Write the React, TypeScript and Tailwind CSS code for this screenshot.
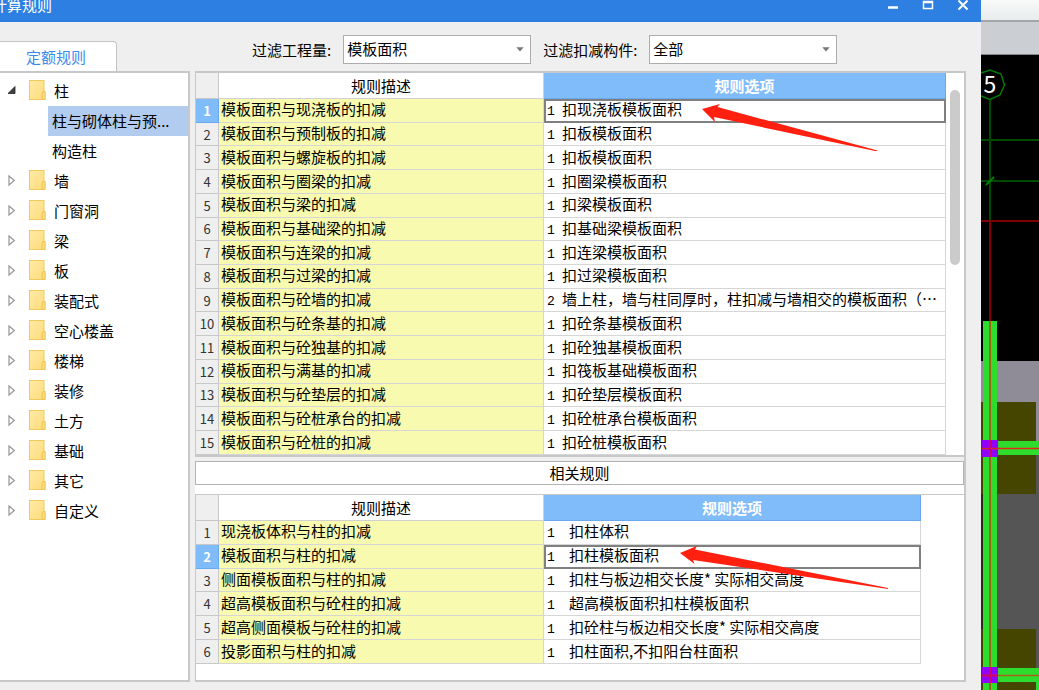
import React, { useState } from 'react';

interface Rule {
  desc: string;
  code: string;
  option: string;
}

interface RuleTableProps {
  rules: Rule[];
  selected: number;
  onSelect: (index: number) => void;
  height: string;
  codeWidth: string;
  arrowRow: number;
  arrow: React.ReactNode;
}

const mainRules: Rule[] = [
  { desc: '模板面积与现浇板的扣减', code: '1', option: '扣现浇板模板面积' },
  { desc: '模板面积与预制板的扣减', code: '1', option: '扣板模板面积' },
  { desc: '模板面积与螺旋板的扣减', code: '1', option: '扣板模板面积' },
  { desc: '模板面积与圈梁的扣减', code: '1', option: '扣圈梁模板面积' },
  { desc: '模板面积与梁的扣减', code: '1', option: '扣梁模板面积' },
  { desc: '模板面积与基础梁的扣减', code: '1', option: '扣基础梁模板面积' },
  { desc: '模板面积与连梁的扣减', code: '1', option: '扣连梁模板面积' },
  { desc: '模板面积与过梁的扣减', code: '1', option: '扣过梁模板面积' },
  { desc: '模板面积与砼墙的扣减', code: '2', option: '墙上柱，墙与柱同厚时，柱扣减与墙相交的模板面积（…' },
  { desc: '模板面积与砼条基的扣减', code: '1', option: '扣砼条基模板面积' },
  { desc: '模板面积与砼独基的扣减', code: '1', option: '扣砼独基模板面积' },
  { desc: '模板面积与满基的扣减', code: '1', option: '扣筏板基础模板面积' },
  { desc: '模板面积与砼垫层的扣减', code: '1', option: '扣砼垫层模板面积' },
  { desc: '模板面积与砼桩承台的扣减', code: '1', option: '扣砼桩承台模板面积' },
  { desc: '模板面积与砼桩的扣减', code: '1', option: '扣砼桩模板面积' },
];

const relatedRules: Rule[] = [
  { desc: '现浇板体积与柱的扣减', code: '1', option: '扣柱体积' },
  { desc: '模板面积与柱的扣减', code: '1', option: '扣柱模板面积' },
  { desc: '侧面模板面积与柱的扣减', code: '1', option: '扣柱与板边相交长度* 实际相交高度' },
  { desc: '超高模板面积与砼柱的扣减', code: '1', option: '超高模板面积扣柱模板面积' },
  { desc: '超高侧面模板与砼柱的扣减', code: '1', option: '扣砼柱与板边相交长度* 实际相交高度' },
  { desc: '投影面积与柱的扣减', code: '1', option: '扣柱面积,不扣阳台柱面积' },
];

const treeItems = [
  { label: '柱', children: ['柱与砌体柱与预...', '构造柱'] },
  { label: '墙' },
  { label: '门窗洞' },
  { label: '梁' },
  { label: '板' },
  { label: '装配式' },
  { label: '空心楼盖' },
  { label: '楼梯' },
  { label: '装修' },
  { label: '土方' },
  { label: '基础' },
  { label: '其它' },
  { label: '自定义' },
];

const FolderIcon = () => (
  <svg width="17" height="21" viewBox="0 0 17 21" className="shrink-0">
    <defs>
      <linearGradient id="folder" x1="0" y1="0" x2="1" y2="1">
        <stop offset="0" stopColor="#ffeaa6" />
        <stop offset="1" stopColor="#ffdc7c" />
      </linearGradient>
    </defs>
    <rect x="0.5" y="0.5" width="14.5" height="19" fill="url(#folder)" stroke="#f0cb5c" />
    <path d="M13 19.500V13L14 11.500h2.200v8z" fill="#ffdc7a" stroke="#ecc350" />
  </svg>
);

const Expander = ({ open }: { open: boolean }) => (
  <svg width="9" height="11" viewBox="0 0 9 11" className="shrink-0">
    {open ? (
      <path d="M7 1.5V8.500H0z" fill="#404040" stroke="#262626" strokeWidth="0.8" />
    ) : (
      <path d="M1 1L6.3 5.5L1 10z" fill="#fff" stroke="#969696" strokeWidth="1.200" />
    )}
  </svg>
);

const FilterSelect = ({ id, label, options }: { id: string; label: string; options: string[] }) => (
  <div className="flex items-center gap-3">
    <label htmlFor={id}>{label}</label>
    <div className="relative">
      <select
        id={id}
        className="block h-[29px] w-[188px] appearance-none border border-[#adadad] bg-white pb-px pl-[3px] pr-6 text-[15px] leading-5 text-black outline-none"
      >
        {options.map((o) => (
          <option key={o}>{o}</option>
        ))}
      </select>
      <svg width="8" height="5" viewBox="0 0 8 5" className="pointer-events-none absolute right-[7px] top-3">
        <path d="M0.3 0.3h7.4L4 4.5z" fill="#777" />
      </svg>
    </div>
  </div>
);

const RuleTable: React.FC<RuleTableProps> = ({
  rules,
  selected,
  onSelect,
  height,
  codeWidth,
  arrowRow,
  arrow,
}) => (
  <table className={`w-full table-fixed border-separate border-spacing-0 leading-5 ${height}`}>
    <colgroup>
      <col className="w-[23px]" />
      <col className="w-[325px]" />
      <col />
    </colgroup>
    <thead>
      <tr className="h-[26px]">
        <td className="border-b border-r border-[#c8c8c8] bg-[#efefef] p-0"></td>
        <th className="border-b border-r border-[#d0d0d0] p-0 font-normal">规则描述</th>
        <th className="border-b border-r border-[#6ba9ee] bg-[#80bbfa] p-0 font-bold text-white">规则选项</th>
      </tr>
    </thead>
    <tbody>
      {rules.map((rule, i) => (
        <tr key={rule.desc} onClick={() => onSelect(i)}>
          <th
            className={`border-b border-r p-0 pt-px text-center text-[13px] ${
              i === selected
                ? 'border-[#6ba9ee] bg-[#80bbfa] font-bold text-white'
                : 'border-[#c8c8c8] bg-[#efefef] font-normal text-[#333]'
            }`}
          >
            {i + 1}
          </th>
          <td className="whitespace-nowrap border-b border-r border-[#d6d6d6] bg-[#f7faaf] p-0 pb-[2px] pl-[2px]">
            {rule.desc}
          </td>
          <td
            className={`relative whitespace-nowrap border-b border-r border-[#d6d6d6] p-0 pb-[2px] pl-[3px] ${
              i === selected ? 'outline-2 -outline-offset-2 outline-[#808080]' : ''
            }`}
          >
            <div className="flex h-5 items-baseline">
              <span className={`shrink-0 font-['Liberation_Mono',monospace] text-[13px] ${codeWidth}`}>{rule.code}</span>
              <span>{rule.option}</span>
            </div>
            {i === arrowRow && arrow}
          </td>
        </tr>
      ))}
    </tbody>
  </table>
);

const CadCanvas = () => (
  <svg width="58" height="635" viewBox="981 55 58 635" className="block">
    <rect x="981" y="55" width="58" height="635" fill="#000" />
    <rect x="981" y="361" width="58" height="94" fill="#8f8c98" />
    <rect x="981" y="455" width="58" height="235" fill="#555" />
    <path d="M981 402h55v92h-55zM981 629h55v61h-55z" fill="#454500" />
    <path d="M981 494h2v135h-2z" fill="#2a2a20" />
    <g stroke="#004a00" strokeWidth="2" fill="none">
      <path d="M990 99V221M981 140H1039M981 181H1039" />
      <path d="M986 185L994 177" stroke="#008000" />
      <path d="M981 73L990 70L1001 74L1004.500 85L1000 95L990 99.500L981 96" stroke="#007d00" strokeWidth="1.500" />
    </g>
    <path d="M981 221H1039" stroke="#a80000" strokeWidth="1.500" />
    <path d="M990 221V321" stroke="#800000" strokeWidth="2" />
    <path d="M983 321h14v369h-14zM997 441h42v14h-42zM997 668h42v14h-42zM1036 682h3v8h-3z" fill="#2ddc2d" />
    <path d="M990 321V690" stroke="#9b6614" strokeWidth="2" />
    <path d="M982 440h16v17h-16zM982 667h16v16h-16z" fill="#9000ff" />
    <path d="M982 448.500H1039" stroke="#e02818" strokeWidth="1.500" />
    <path d="M982 675.500H1039" stroke="#a8601a" strokeWidth="1.500" />
    <path d="M990 440V457M990 667V683M982 675.500H998" stroke="#d00070" strokeWidth="2" />
    <text x="990" y="93" textAnchor="middle" fontSize="23" fill="#fff" className="font-['Noto_Sans_CJK_SC',sans-serif]">
      5
    </text>
  </svg>
);

export default function App() {
  const [mainRow, setMainRow] = useState(0);
  const [relatedRow, setRelatedRow] = useState(1);
  const [treeNode, setTreeNode] = useState('柱与砌体柱与预...');
  const [opened, setOpened] = useState<string[]>(['柱']);

  const toggle = (label: string) =>
    setOpened(opened.includes(label) ? opened.filter((o) => o !== label) : [...opened, label]);

  return (
    <div className="flex min-h-screen overflow-hidden bg-[#efefef] font-['Noto_Sans_CJK_SC',sans-serif] text-[15px] leading-5 text-black">
      <div className="flex min-w-0 flex-1 flex-col">
        <header className="flex h-[22px] items-start justify-between overflow-hidden bg-[#2d7fe1] pr-3 text-white">
          <h1 className="-ml-2 leading-[10px]">计算规则</h1>
          <div className="flex items-start gap-[23px]">
            <button aria-label="最小化">
              <svg width="12" height="12" viewBox="0 0 12 12">
                <path d="M1 7.500h10" stroke="#fff" strokeWidth="2.500" />
              </svg>
            </button>
            <button aria-label="最大化">
              <svg width="12" height="12" viewBox="0 0 12 12">
                <path d="M1.500 1.500h9v7h-9zM1 2.500h10" stroke="#fff" strokeWidth="1.500" fill="none" />
              </svg>
            </button>
            <button aria-label="关闭">
              <svg width="12" height="12" viewBox="0 0 12 12">
                <path d="M1.500 0.500L10.500 9.500M10.500 0.500L1.500 9.500" stroke="#fff" strokeWidth="2" />
              </svg>
            </button>
          </div>
        </header>

        <div className="flex h-[49px] items-end">
          <button className="h-[30px] w-[117px] rounded-tr border-r border-t border-[#c3c3c3] bg-white pr-1 text-[#3c8bea]">
            定额规则
          </button>
          <div className="ml-[135px] flex gap-3 pb-[7px]">
            <FilterSelect id="quantity" label="过滤工程量:" options={['模板面积', '体积']} />
            <FilterSelect id="member" label="过滤扣减构件:" options={['全部', '柱', '梁']} />
          </div>
        </div>

        <main className="mb-2 mr-[15px] flex flex-1 gap-[5px]">
          <nav className="w-[190px] shrink-0 border-b-2 border-r-2 border-t-2 border-[#c6c8ca] bg-white pt-[3px]">
            <ul>
              {treeItems.map((item) => (
                <li key={item.label}>
                  <button className="flex h-[30px] w-full items-center pb-px pl-2 text-left" onClick={() => toggle(item.label)}>
                    <Expander open={opened.includes(item.label)} />
                    <span className="ml-3 mr-2">
                      <FolderIcon />
                    </span>
                    {item.label}
                  </button>
                  {item.children && opened.includes(item.label) && (
                    <ul className="pl-12">
                      {item.children.map((child) => (
                        <li key={child}>
                          <button
                            onClick={() => setTreeNode(child)}
                            className={`block h-[30px] w-full whitespace-nowrap pl-1 text-left ${
                              treeNode === child ? 'bg-[#b1ccef]' : ''
                            }`}
                          >
                            {child}
                          </button>
                        </li>
                      ))}
                    </ul>
                  )}
                </li>
              ))}
            </ul>
          </nav>

          <div className="flex min-w-0 flex-1 flex-col border-r-2 border-[#c6c8ca]">
            <section className="flex border-b-2 border-l border-t-2 border-[#c6c8ca] bg-white">
              <div className="min-w-0 flex-1">
                <RuleTable
                  rules={mainRules}
                  selected={mainRow}
                  onSelect={setMainRow}
                  height="h-[382px]"
                  codeWidth="w-[15px]"
                  arrowRow={0}
                  arrow={
                    <svg width="176" height="48" viewBox="0 0 176 48" className="pointer-events-none absolute left-[158px] top-1 z-10">
                      <path d="M0 6L18 1L15.500 4L175.500 47.500V48.500L12 14L13 19z" fill="#ff2010" />
                    </svg>
                  }
                />
              </div>
              <div className="flex w-[18px] shrink-0 justify-center pt-[17px]">
                <div className="h-[175px] w-[10px] rounded-full bg-[#cbcbcb]"></div>
              </div>
            </section>

            <div className="bg-white">
              <div className="h-1 bg-[#efefef]"></div>
              <h2 className="h-6 border border-[#b4b4b4] text-center leading-[22px]">相关规则</h2>
              <div className="h-[9px]"></div>
            </div>

            <section className="flex-1 border-b-2 border-l border-t border-[#c6c8ca] bg-white pr-[43px]">
              <RuleTable
                rules={relatedRules}
                selected={relatedRow}
                onSelect={setRelatedRow}
                height="h-[169px]"
                codeWidth="w-[22px]"
                arrowRow={1}
                arrow={
                  <svg width="209" height="43" viewBox="0 0 209 43" className="pointer-events-none absolute left-[136px] top-px z-10">
                    <path d="M0 7L17 0L15 3.500L208 42V43L13 14L14.500 18z" fill="#ff2010" />
                  </svg>
                }
              />
            </section>
          </div>
        </main>
      </div>

      <aside className="w-[58px] shrink-0 bg-black">
        <div className="h-[22px] border-b-2 border-[#a3a5a6] bg-gradient-to-b from-[#f9fafa] to-[#e8ecec]"></div>
        <div className="h-[33px] border-b border-[#85878a] bg-[#cbced3]"></div>
        <CadCanvas />
      </aside>
    </div>
  );
}
